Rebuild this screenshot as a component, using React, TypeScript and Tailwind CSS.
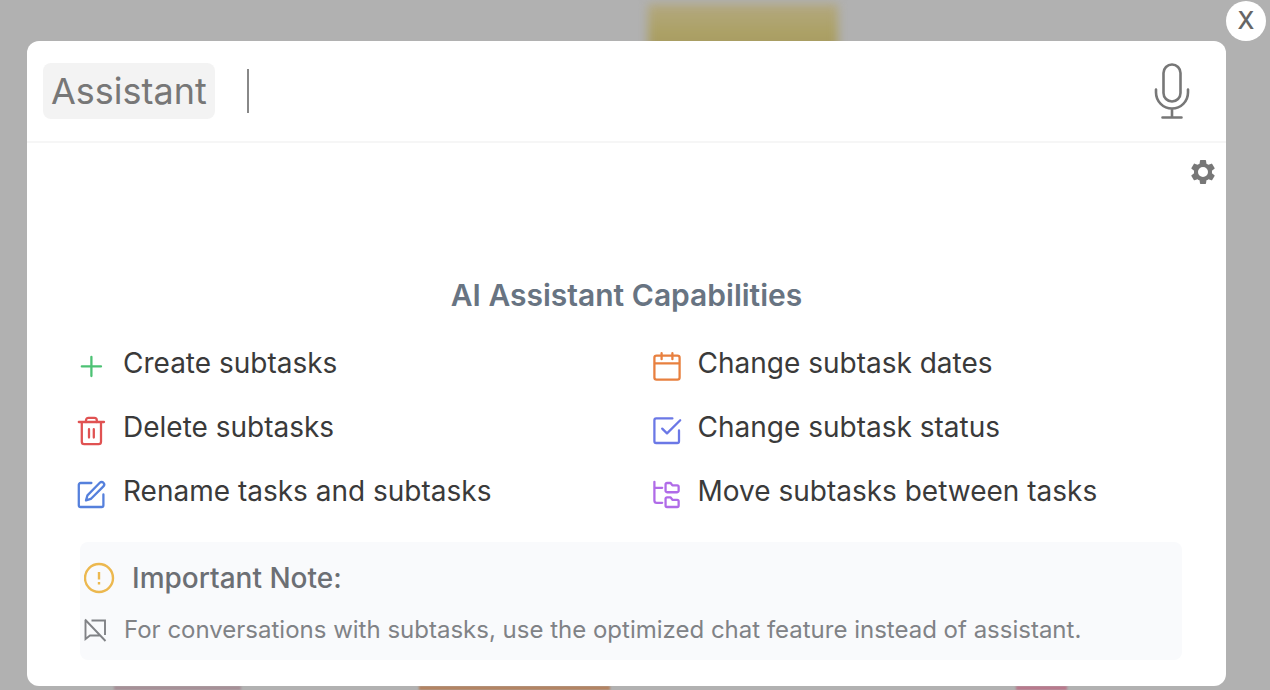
import type { ReactNode } from "react";

type Capability = {
  name: string;
  color: string;
  icon: ReactNode;
};

const capabilities: Capability[] = [
  {
    name: "Create subtasks",
    color: "text-[#4cc274]",
    icon: <path d="M12 4v16M4 12h16" />,
  },
  {
    name: "Change subtask dates",
    color: "text-[#e8803f]",
    icon: (
      <>
        <rect x="2" y="3" width="21" height="20" rx="1.8" />
        <path d="M2.5 9.500h20M8 1v5M17 1v5" />
      </>
    ),
  },
  {
    name: "Delete subtasks",
    color: "text-[#e05252]",
    icon: (
      <>
        <path d="M1.500 5h21M4 5v16.500a2 2 0 0 0 2 2h12a2 2 0 0 0 2-2V5" />
        <path d="M7.500 5V3.500a2 2 0 0 1 2-2h5a2 2 0 0 1 2 2V5M10 11v7M14 11v7" />
      </>
    ),
  },
  {
    name: "Change subtask status",
    color: "text-[#6b78e6]",
    icon: (
      <>
        <path d="M17 2H3.500a1.500 1.500 0 0 0-1.500 1.500v17.500a1.500 1.500 0 0 0 1.500 1.500H21a1.500 1.500 0 0 0 1.500-1.500V12" />
        <path d="m8.500 10.500 4 4L23.500 3.500" />
      </>
    ),
  },
  {
    name: "Rename tasks and subtasks",
    color: "text-[#5580dc]",
    icon: (
      <>
        <path d="M12 2.500H3a1.500 1.500 0 0 0-1.500 1.500v17a1.500 1.500 0 0 0 1.500 1.500h17.500a1.500 1.500 0 0 0 1.500-1.500v-9" />
        <path d="M19 2.300a2.100 2.100 0 0 1 3 3L11.500 15.800 7.500 17l1.200-4.200z" />
      </>
    ),
  },
  {
    name: "Move subtasks between tasks",
    color: "text-[#b06be8]",
    icon: (
      <>
        <path d="M2 1.500V17a2 2 0 0 0 2 2h4.500M2 6.500h6.500" />
        <path d="M12.500 2.500h3l1.500 2h4a1.200 1.200 0 0 1 1.200 1.200v3.300a1.200 1.200 0 0 1-1.200 1.200h-8.500a1.200 1.200 0 0 1-1.200-1.200V3.700a1.200 1.200 0 0 1 1.200-1.200z" />
        <path d="M12.500 14.500h3l1.500 2h4a1.200 1.200 0 0 1 1.200 1.200v3.600a1.200 1.200 0 0 1-1.200 1.200h-8.500a1.200 1.200 0 0 1-1.200-1.200v-5.600a1.200 1.200 0 0 1 1.200-1.200z" />
      </>
    ),
  },
];

const MicIcon = () => {
  return (
    <svg
      className="h-14 w-9"
      viewBox="0 0 36 56"
      fill="none"
      stroke="currentColor"
      strokeWidth="2.6"
      strokeLinecap="round"
      aria-hidden="true"
    >
      <rect x="9.500" y="1.500" width="17" height="37" rx="8.500" />
      <path d="M2 26.500v3a16 16 0 0 0 32 0v-3M18 45.500v9M8.500 54.500h19" />
    </svg>
  );
};

const GearIcon = () => {
  return (
    <svg className="size-[30px]" viewBox="0 0 24 24" fill="currentColor" aria-hidden="true">
      <path d="M19.140 12.940c.04-.3.06-.61.06-.94 0-.32-.02-.64-.07-.94l2.030-1.580a.49.49 0 0 0 .12-.61l-1.920-3.320a.488.488 0 0 0-.59-.22l-2.390.96c-.5-.38-1.030-.7-1.620-.94l-.36-2.540a.484.484 0 0 0-.48-.41h-3.840c-.24 0-.43.17-.47.41l-.36 2.540c-.59.24-1.130.57-1.620.94l-2.390-.96c-.22-.08-.47 0-.59.22L2.740 8.870c-.12.21-.08.47.12.61l2.030 1.580c-.05.3-.09.63-.09.94s.02.64.07.94l-2.030 1.580a.49.49 0 0 0-.12.61l1.920 3.320c.12.22.37.29.59.22l2.390-.96c.5.38 1.030.7 1.620.94l.36 2.540c.05.24.24.41.48.41h3.840c.24 0 .44-.17.47-.41l.36-2.540c.59-.24 1.130-.56 1.620-.94l2.390.96c.22.08.47 0 .59-.22l1.920-3.320c.12-.22.07-.47-.12-.61l-2.010-1.580zM12 16A4 4 0 1 1 12 8a4 4 0 0 1 0 8z" />
    </svg>
  );
};

// blurred shapes of the board that stay visible behind the overlay
const Backdrop = () => {
  return (
    <div className="absolute inset-0 overflow-hidden" aria-hidden="true">
      <div className="absolute top-1 left-[51%] h-14 w-[15%] bg-linear-to-b from-[#b3a880] via-[#aca165] to-[#a3955f] blur-[5px]" />
      <div className="absolute bottom-0 left-[9%] h-1 w-[10%] bg-[#a58d94] blur-[1px]" />
      <div className="absolute bottom-0 left-[33%] h-1 w-[15%] bg-[#b3805c] blur-[1px]" />
      <div className="absolute bottom-0 left-[80%] h-1 w-[4%] bg-[#b8758a] blur-[1px]" />
    </div>
  );
};

const App = () => {
  return (
    <div className="relative min-h-screen bg-[#b1b1b1] pt-[41px] pr-11 pb-1 pl-[27px] font-['Inter',sans-serif]">
      <Backdrop />
      <main className="relative rounded-xl bg-white">
        <button
          type="button"
          aria-label="Close"
          className="absolute -top-10 -right-10 flex size-10 items-center justify-center rounded-full bg-white text-2xl font-medium text-[#666]"
        >
          X
        </button>

        <header className="flex h-[102px] items-center border-b-2 border-[#f6f6f6] pr-9 pl-4">
          <label
            htmlFor="prompt"
            className="rounded-lg bg-[#f3f3f3] px-2 py-1 text-4xl leading-12 text-[#777]"
          >
            Assistant
          </label>
          <input
            id="prompt"
            type="text"
            className="ml-8 h-11 min-w-0 flex-1 border-l-2 border-[#888] pl-2 text-4xl text-[#777] outline-none"
          />
          <button type="button" aria-label="Speak" className="text-[#777]">
            <MicIcon />
          </button>
        </header>

        <div className="flex justify-end pt-[14px] pr-2">
          <button type="button" aria-label="Settings" className="text-[#777]">
            <GearIcon />
          </button>
        </div>

        <h1 className="pt-[88px] text-center text-[30px] leading-10 font-semibold text-[#687482]">
          AI Assistant Capabilities
        </h1>

        <ul className="grid grid-cols-2 gap-y-6 pt-7 pl-[50px]">
          {capabilities.map(({ name, color, icon }) => {
            return (
              <li key={name} className="flex items-center gap-4">
                <svg
                  className={`mt-2 size-[30px] shrink-0 ${color}`}
                  viewBox="0 0 25 25"
                  fill="none"
                  stroke="currentColor"
                  strokeWidth="1.9"
                  strokeLinecap="round"
                  strokeLinejoin="round"
                  aria-hidden="true"
                >
                  {icon}
                </svg>
                <span className="text-[28px] leading-10 text-[#3a3a3a]">{name}</span>
              </li>
            );
          })}
        </ul>

        <div className="pt-[31px] pr-11 pb-[26px] pl-[53px]">
          <section className="rounded-lg bg-[#f9fafc] pt-4 pb-3 pl-1 text-[#808286]">
            <h2 className="flex items-center gap-4 text-[28px] leading-10 font-medium text-[#6c6f74]">
              <svg
                className="size-8 text-[#ecb84f]"
                viewBox="0 0 32 32"
                fill="none"
                stroke="currentColor"
                strokeWidth="2.4"
                aria-hidden="true"
              >
                <circle cx="15" cy="16" r="14" />
                <path d="M15 10v7.500M15 20v2.500" />
              </svg>
              Important Note:
            </h2>
            <p className="flex items-center gap-4 pt-[14px] text-2xl leading-9">
              <svg
                className="size-6"
                viewBox="0 0 24 24"
                fill="none"
                stroke="currentColor"
                strokeWidth="1.9"
                aria-hidden="true"
              >
                <path d="M1 1.500 21.500 23M1.500 2.500v18.500l4.500-3.500H16.500M7.500 2.500h13.500V17" />
              </svg>
              For conversations with subtasks, use the optimized chat feature instead of assistant.
            </p>
          </section>
        </div>
      </main>
    </div>
  );
};

export default App;
